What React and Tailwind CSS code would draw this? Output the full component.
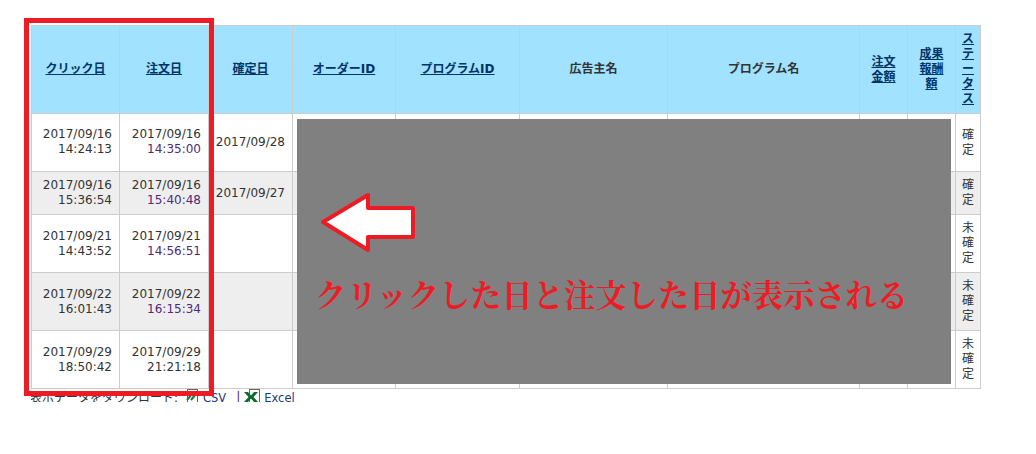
const H = ({ children, className = "" }) => (
  <th className={`border border-[#cccccc] text-center align-middle px-[6px] py-0 font-bold text-[12px] leading-[15px] ${className}`}>
    {children}
  </th>
);
const L = ({ children }) => <a className="underline text-[#003366]">{children}</a>;
const rows = [
  { h: "h-[58px]", bg: "bg-white", c: ["2017/09/16", "14:24:13"], o: ["2017/09/16", "14:35:00"], f: "2017/09/28", s: ["確", "定"], v: true, lift: "pb-[2px]" },
  { h: "h-[43px]", bg: "bg-[#eeeeee]", c: ["2017/09/16", "15:36:54"], o: ["2017/09/16", "15:40:48"], f: "2017/09/27", s: ["確", "定"], v: true, lift: "" },
  { h: "h-[58px]", bg: "bg-white", c: ["2017/09/21", "14:43:52"], o: ["2017/09/21", "14:56:51"], f: "", s: ["未", "確", "定"], v: true, lift: "" },
  { h: "h-[58px]", bg: "bg-[#eeeeee]", c: ["2017/09/22", "16:01:43"], o: ["2017/09/22", "16:15:34"], f: "", s: ["未", "確", "定"], v: true, lift: "" },
  { h: "h-[58px]", bg: "bg-white", c: ["2017/09/29", "18:50:42"], o: ["2017/09/29", "21:21:18"], f: "", s: ["未", "確", "定"], v: false, lift: "" },
];
const D = ({ children, className = "" }) => (
  <td className={`border border-[#cccccc] align-middle pl-[6px] pr-[7px] py-0 text-right ${className}`}>{children}</td>
);

export default function App() {
  return (
    <div className="relative w-[1036px] h-[454px] overflow-hidden bg-white text-[12px] leading-[15px] text-[#333333] font-['DejaVu_Sans','Noto_Sans_CJK_JP',sans-serif]">
      <div className="pt-[25px] pl-[31px]">
        <table className="table-fixed border-collapse w-[949px]">
          <colgroup>
            <col className="w-[88px]" /><col className="w-[89px]" /><col className="w-[84px]" /><col className="w-[103px]" />
            <col className="w-[124px]" /><col className="w-[148px]" /><col className="w-[192px]" /><col className="w-[48px]" />
            <col className="w-[48px]" /><col className="w-[25px]" />
          </colgroup>
          <thead>
            <tr className="h-[88px] bg-[#a0e2ff]">
              <H><L>クリック日</L></H>
              <H><L>注文日</L></H>
              <H><L>確定日</L></H>
              <H><L>オーダーID</L></H>
              <H><L>プログラムID</L></H>
              <H>広告主名</H>
              <H>プログラム名</H>
              <H><L>注文<br />金額</L></H>
              <H><L>成果<br />報酬<br />額</L></H>
              <H className="!px-0"><L>ス<br />テ<br />ー<br />タ<br />ス</L></H>
            </tr>
          </thead>
          <tbody>
            {rows.map((r, i) => (
              <tr key={i} className={`${r.h} ${r.bg}`}>
                <D className={r.lift}>{r.c[0]}<br />{r.c[1]}</D>
                <D className={r.lift}>{r.o[0]}<br /><span className={r.v ? "text-[#4f2a78]" : ""}>{r.o[1]}</span></D>
                <D>{r.f}</D>
                <D /><D /><D /><D /><D /><D />
                <D className="!px-0 !text-center">{r.s.map((t, j) => <div key={j}>{t}</div>)}</D>
              </tr>
            ))}
          </tbody>
        </table>
        <div className="flex items-start h-[13px] overflow-hidden">
          <span className="text-[#333333] w-[156px] -ml-[1px] mt-[2px] shrink-0">表示データをダウンロード:</span>
          <svg width="13" height="14" viewBox="0 0 13 14" className="shrink-0">
            <rect x="1.5" y="0.5" width="10" height="14" fill="#ffffff" stroke="#666666" />
            <path d="M1 11 L6 5 M5 11 L10 5" stroke="#1c7a3c" strokeWidth="2" />
          </svg>
          <a className="ml-[4px] mt-[2px] text-[11.5px] text-[#1a3a78]">CSV</a>
          <span className="ml-[10px] mt-[1px] text-[#551a8b]">|</span>
          <svg width="16" height="14" viewBox="0 0 16 14" className="ml-[4px] shrink-0">
            <rect x="5.5" y="0.5" width="10" height="14" fill="#ffffff" stroke="#666666" />
            <path d="M0 3 L4 3 L7 6.5 L10 3 L14 3 L9.5 8 L14 13 L10 13 L7 9.5 L4 13 L0 13 L4.5 8 Z" fill="#0b6b2d" />
          </svg>
          <a className="ml-[4px] mt-[2px] text-[11.5px] text-[#1a3a78]">Excel</a>
        </div>
      </div>

      <div className="absolute left-[297px] top-[119px] w-[654px] h-[265px] bg-[#808080]">
        <svg width="98" height="64" viewBox="0 0 98 64" className="block ml-[23px] mt-[71px]">
          <polygon points="3,32 48,5 48,18 93,18 93,47 48,47 48,60" fill="#ffffff" stroke="#ed1c24" strokeWidth="4" strokeLinejoin="round" />
        </svg>
        <div className="ml-[18px] mt-[20px] text-[31.3px] leading-[40px] font-bold whitespace-nowrap text-[#ed1c24] font-['Noto_Serif_CJK_JP','Liberation_Serif','Noto_Sans_CJK_JP',serif]">
          クリックした日と注文した日が表示される
        </div>
      </div>

      <div className="absolute left-[24px] top-[18px] w-[190px] h-[378px] border-[5px] border-[#ed1c24]" />
    </div>
  );
}
